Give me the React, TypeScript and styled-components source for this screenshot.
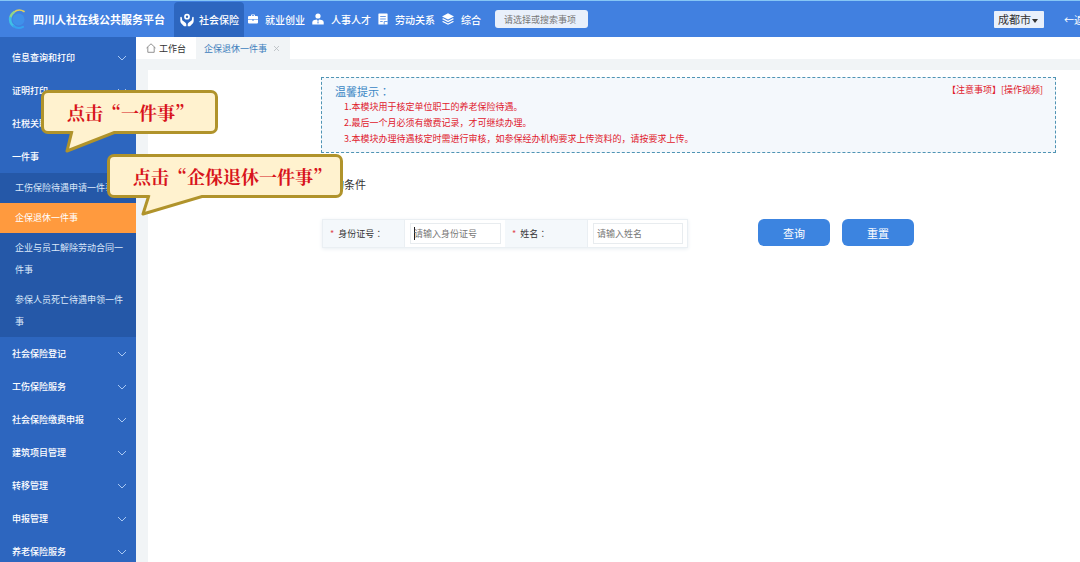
import React from "react";
import styled, { createGlobalStyle } from "styled-components";

const Global = createGlobalStyle`
  * { box-sizing: border-box; }
  html, body { margin: 0; height: 100%; }
  #root { height: 100%; }
  body, button, input, select {
    font-family: "Noto Sans CJK SC", "Liberation Sans", sans-serif;
  }
  body { font-size: 9px; color: #333; background: #fff; overflow: hidden; }
  a { color: inherit; text-decoration: none; }
  ul, ol { margin: 0; padding: 0; list-style: none; }
`;

const Page = styled.div`
  position: relative;
  display: flex;
  flex-direction: column;
  height: 100%;
  overflow: hidden;
`;

const Header = styled.header`
  display: flex;
  flex: none;
  align-items: center;
  height: 37px;
  padding-left: 8px;
  border-top: 1px solid #86c6f5;
  background: #4180e0;
  color: #fff;
  overflow: hidden;
  white-space: nowrap;
`;

const Brand = styled.h1`
  display: flex;
  align-items: center;
  gap: 5px;
  width: 166px;
  margin: 0;
  font-size: 11px;
  font-weight: 700;
`;

const Nav = styled.nav`
  display: flex;
  align-self: stretch;
`;

const NavItem = styled.a<{ $active?: boolean }>`
  display: flex;
  align-items: center;
  gap: ${(p) => (p.$active ? 5 : 7)}px;
  padding: ${(p) => (p.$active ? "0 5px 0 6px" : "0 3px 0 4px")};
  margin-top: ${(p) => (p.$active ? 1 : 0)}px;
  border-radius: 4px 4px 0 0;
  background: ${(p) => (p.$active ? "#2d66bf" : "transparent")};
  font-size: 10px;
  font-weight: 500;
`;

const Search = styled.input`
  width: 93px;
  height: 18px;
  margin-left: 11px;
  padding: 0 9px;
  border: 0;
  border-radius: 3px;
  background: #e9f0fb;
  font-size: 9px;
  &::placeholder { color: #777; opacity: 1; }
`;

const CityBox = styled.div`
  position: relative;
  display: flex;
  align-items: center;
  flex: none;
  margin-left: auto;
  color: #333;
`;

const City = styled.select`
  appearance: none;
  width: 50px;
  height: 17px;
  padding: 0 4px;
  border: 0;
  border-radius: 1px;
  background: #e9f0fb;
  color: #333;
  font-size: 11px;
`;

const CityArrow = styled.svg`
  position: absolute;
  right: 6px;
  top: 8px;
  pointer-events: none;
`;

const Back = styled.a`
  flex: none;
  width: 16px;
  margin-left: 20px;
  overflow: hidden;
  font-size: 10px;
`;

const Body = styled.div`
  display: flex;
  flex: 1;
  min-height: 0;
`;

const Sidebar = styled.aside`
  flex: none;
  width: 136px;
  padding-top: 4px;
  background: #2d66bf;
  color: #fff;
  overflow: hidden;
`;

const MenuButton = styled.button`
  display: flex;
  align-items: center;
  justify-content: space-between;
  width: 100%;
  height: 33px;
  padding: 0 9px 0 12px;
  border: 0;
  background: none;
  color: #fff;
  font-size: 9px;
  font-weight: 500;
  text-align: left;
`;

const SubMenu = styled.ul`
  background: #2558a8;
`;

const SubLink = styled.a<{ $active?: boolean }>`
  display: block;
  padding: 4px 8px 4px 15px;
  background: ${(p) => (p.$active ? "#ff9a3e" : "transparent")};
  color: ${(p) => (p.$active ? "#fff" : "#dbe8fa")};
  line-height: 22px;
`;

const Main = styled.main`
  display: flex;
  flex: 1;
  flex-direction: column;
  min-width: 0;
  background: #f1f4f6;
`;

const Tabs = styled.div`
  display: flex;
  flex: none;
  height: 22px;
  background: #fff;
`;

const Tab = styled.a<{ $active?: boolean }>`
  display: flex;
  align-items: center;
  gap: ${(p) => (p.$active ? 6 : 3)}px;
  padding: 0 10px;
  padding-left: ${(p) => (p.$active ? 8 : 10)}px;
  background: ${(p) => (p.$active ? "#f1f4f6" : "#fff")};
  color: ${(p) => (p.$active ? "#3f80bd" : "#333")};
`;

const Content = styled.div`
  flex: 1;
  margin: 11px 0 0 12px;
  padding: 7px 24px 0 173px;
  background: #fff;
`;

const Notice = styled.section`
  display: flex;
  justify-content: space-between;
  align-items: flex-start;
  min-height: 76px;
  padding: 5px 12px 0 13px;
  border: 1px dashed #4f94b4;
  background: #f4f8fc;
  color: #e0202c;
`;

const NoticeTitle = styled.h2`
  margin: 0;
  color: #3a86c4;
  font-size: 11px;
  font-weight: 400;
  line-height: 16px;
`;

const NoticeList = styled.ol`
  padding-left: 9px;
  line-height: 16px;
`;

const NoticeLinks = styled.div`
  flex: none;
  line-height: 14px;
`;

/* The Japanese face centres the full-width colon in its box. */
const Colon = styled.span`
  font-family: "Noto Sans CJK JP", sans-serif;
`;

const SectionTitle = styled.h2`
  margin: 23px 0 0 1px;
  font-size: 11px;
  font-weight: 400;
  line-height: 16px;
`;

const QueryForm = styled.form`
  display: flex;
  align-items: flex-start;
  margin: 27px 0 0 1px;
`;

const Fields = styled.div`
  display: grid;
  grid-template-columns: 81px 101px 82px 100px;
  height: 29px;
  border: 1px solid #eaeff3;
  box-shadow: 0 1px 4px #e8eef2;
`;

const Label = styled.label`
  display: flex;
  align-items: center;
  padding-left: 7px;
  background: #f4f8fb;
`;

const Required = styled.span`
  margin-right: 4px;
  color: #e04a50;
`;

const Cell = styled.div`
  display: flex;
  align-items: center;
  padding: 0 4px 0 5px;
  border-left: 1px solid #eaeff3;
`;

const Field = styled.div`
  display: flex;
  align-items: center;
  width: 100%;
  height: 21px;
  padding-left: 3px;
  border: 1px solid #e8ecef;
`;

const Caret = styled.span`
  flex: none;
  width: 1px;
  height: 13px;
  margin-right: -1px;
  background: #222;
`;

const TextInput = styled.input`
  width: 100%;
  min-width: 0;
  padding: 0;
  border: 0;
  outline: 0;
  background: none;
  font-size: 9px;
  &::placeholder { color: #777; opacity: 1; }
`;

const Actions = styled.div`
  display: flex;
  gap: 12px;
  margin-left: 70px;
`;

const ActionButton = styled.button`
  width: 72px;
  height: 27px;
  padding: 0;
  border: 0;
  border-radius: 6px;
  background: #3c84e0;
  color: #fff;
  font-size: 11px;
`;

const Bubble = styled.div<{ $left: number; $top: number; $width: number }>`
  position: absolute;
  left: ${(p) => p.$left}px;
  top: ${(p) => p.$top}px;
  width: ${(p) => p.$width}px;
  height: 44px;
  padding-left: 23px;
  border: 3px solid #b0932b;
  border-radius: 7px;
  background: #fff2cf;
  color: #d8141c;
  font-family: "Noto Serif CJK SC", "Noto Sans CJK SC", serif;
  font-size: 18px;
  font-weight: 700;
  line-height: 38px;
  white-space: nowrap;
`;

const Tail = styled.svg`
  position: absolute;
  left: 20px;
  top: 38px;
`;

const Chevron = () => (
  <svg width="10" height="6" viewBox="0 0 10 6" fill="none" stroke="#a9c8f2" aria-hidden="true">
    <path d="M1 1l4 4 4-4" />
  </svg>
);

const Logo = () => (
  <svg width="20" height="22" viewBox="0 0 20 22" fill="none" strokeLinecap="round" aria-hidden="true">
    <circle cx="10.500" cy="11.500" r="6" fill="#3f90ea" />
    <path d="M16 3.500A8.500 8.500 0 0 0 6 4.200" stroke="#e0cf5a" strokeWidth="1.600" />
    <path d="M6 4.200A8.500 8.500 0 0 0 2.200 10" stroke="#8fd48a" strokeWidth="2.200" />
    <path d="M2.200 10A8.500 8.500 0 0 0 5.500 18" stroke="#3fc0e6" strokeWidth="2.600" />
    <path d="M5.500 18A8.500 8.500 0 0 0 15 18.800" stroke="#35a2f0" strokeWidth="2" />
  </svg>
);

const icons = {
  hands: (
    <svg width="14" height="14" viewBox="0 0 14 14" fill="#fff" aria-hidden="true">
      <path
        fillRule="evenodd"
        d="M7 .8a2.900 2.900 0 1 1 0 5.800A2.900 2.900 0 1 1 7 .8zM7 2.500a1.200 1.200 0 1 0 0 2.400A1.200 1.200 0 1 0 7 2.500z"
      />
      <path d="M.3 4.600c0-1 1.400-1 1.500 0l.4 2.700 3 2.200c.8.600 1.100 1.300 1.100 2.200v1.600H4L1.300 10.600C.5 9.700.3 8.500.3 7z" />
      <path d="M13.700 4.600c0-1-1.400-1-1.500 0l-.4 2.700-3 2.200c-.8.600-1.100 1.300-1.100 2.200v1.600H10l2.700-2.700c.8-.9 1-2.100 1-3.600z" />
    </svg>
  ),
  briefcase: (
    <svg width="10" height="10" viewBox="0 0 10 10" fill="#fff" aria-hidden="true">
      <path d="M3 2V1.200Q3 .4 3.800.4h2.400Q7 .4 7 1.200V2h2q1 0 1 1v2.300H0V3q0-1 1-1zm.9 0h2.200v-.7H3.900z" />
      <path d="M0 5.800h4v.7h2v-.7h4V8.500q0 1-1 1H1q-1 0-1-1z" />
    </svg>
  ),
  person: (
    <svg width="12" height="12" viewBox="0 0 12 12" fill="#fff" aria-hidden="true">
      <circle cx="6" cy="3" r="2.600" />
      <path d="M.3 11.500V9.200q0-2 2-2.300L5 6.500l1 2 1-2 2.700.4q2 .3 2 2.300v2.300z" />
      <path d="M6 8.200l.7.800L6 11.300 5.300 9z" fill="#4180e0" />
    </svg>
  ),
  doc: (
    <svg width="10" height="12" viewBox="0 0 10 12" fill="none" aria-hidden="true">
      <path d="M1 .5h8q.6 0 .6.6v9.800q0 .6-.6.6H1q-.6 0-.6-.6V1.100Q.4.500 1 .500z" fill="#fff" />
      <path d="M2.200 3.500h5.600M2.200 6h5.600M2.200 8.500h2.500M6.200 11.500V8.500H9.600" stroke="#4180e0" strokeWidth=".8" />
    </svg>
  ),
  layers: (
    <svg width="12" height="12" viewBox="0 0 12 12" fill="#fff" aria-hidden="true">
      <path d="M6 .2l6 3.200-6 3.200-6-3.200z" />
      <path d="M1.200 5.300L6 7.800l4.800-2.500 1.200.8-6 3.100-6-3.100z" />
      <path d="M1.200 7.900L6 10.400l4.800-2.500 1.200.8-6 3.100-6-3.100z" />
    </svg>
  ),
};

const navItems = [
  { label: "社会保险", icon: icons.hands, active: true },
  { label: "就业创业", icon: icons.briefcase },
  { label: "人事人才", icon: icons.person },
  { label: "劳动关系", icon: icons.doc },
  { label: "综合", icon: icons.layers },
];

const menuTop = ["信息查询和打印", "证明打印", "社税关联"];
const subItems = [
  "工伤保险待遇申请一件事",
  "企保退休一件事",
  "企业与员工解除劳动合同一件事",
  "参保人员死亡待遇申领一件事",
];
const menuBottom = [
  "社会保险登记",
  "工伤保险服务",
  "社会保险缴费申报",
  "建筑项目管理",
  "转移管理",
  "申报管理",
  "养老保险服务",
];

const MenuRow = ({ label, open }: { label: string; open?: boolean }) => (
  <MenuButton type="button" aria-expanded={!!open}>
    {label}
    {!open && <Chevron />}
  </MenuButton>
);

type CalloutProps = {
  left: number;
  top: number;
  width: number;
  tip: string;
  children: React.ReactNode;
};

const Callout = ({ left, top, width, tip, children }: CalloutProps) => (
  <Bubble $left={left} $top={top} $width={width}>
    {children}
    <Tail width="84" height="25" viewBox="0 0 84 25" aria-hidden="true">
      <path d={tip} fill="#fff2cf" stroke="#b0932b" strokeWidth="3" strokeLinejoin="round" />
    </Tail>
  </Bubble>
);

export default function App() {
  return (
    <Page>
      <Global />
      <Header>
        <Brand>
          <Logo />
          四川人社在线公共服务平台
        </Brand>
        <Nav>
          {navItems.map((n) => (
            <NavItem key={n.label} href="#" $active={n.active}>
              {n.icon}
              {n.label}
            </NavItem>
          ))}
        </Nav>
        <Search aria-label="搜索事项" placeholder="请选择或搜索事项" />
        <CityBox>
          <City aria-label="城市">
            <option>成都市</option>
          </City>
          <CityArrow width="6" height="4" viewBox="0 0 6 4" aria-hidden="true">
            <path d="M0 0h6L3 4z" fill="#333" />
          </CityArrow>
        </CityBox>
        <Back href="#">←返回</Back>
      </Header>
      <Body>
        <Sidebar>
          {menuTop.map((m) => (
            <MenuRow key={m} label={m} />
          ))}
          <MenuRow label="一件事" open />
          <SubMenu>
            {subItems.map((s, i) => (
              <li key={s}>
                <SubLink href="#" $active={i === 1}>
                  {s}
                </SubLink>
              </li>
            ))}
          </SubMenu>
          {menuBottom.map((m) => (
            <MenuRow key={m} label={m} />
          ))}
        </Sidebar>
        <Main>
          <Tabs>
            <Tab href="#">
              <svg width="10" height="10" viewBox="0 0 10 10" fill="none" stroke="#777" strokeWidth=".8" aria-hidden="true">
                <path d="M.5 5L5 .8 9.500 5M1.800 4v5.300h6.400V4" />
              </svg>
              工作台
            </Tab>
            <Tab href="#" $active>
              企保退休一件事
              <svg width="7" height="7" viewBox="0 0 7 7" stroke="#b5babf" strokeWidth=".8" aria-hidden="true">
                <path d="M1 1l5 5M6 1L1 6" />
              </svg>
            </Tab>
          </Tabs>
          <Content>
            <Notice>
              <div>
                <NoticeTitle>
                  温馨提示<Colon>：</Colon>
                </NoticeTitle>
                <NoticeList>
                  <li>1.本模块用于核定单位职工的养老保险待遇。</li>
                  <li>2.最后一个月必须有缴费记录，才可继续办理。</li>
                  <li>3.本模块办理待遇核定时需进行审核，如参保经办机构要求上传资料的，请按要求上传。</li>
                </NoticeList>
              </div>
              <NoticeLinks>
                <a href="#">【注意事项】</a>
                <a href="#">[操作视频]</a>
              </NoticeLinks>
            </Notice>
            <SectionTitle>查询条件</SectionTitle>
            <QueryForm>
              <Fields>
                <Label htmlFor="idno">
                  <Required>*</Required>身份证号<Colon>：</Colon>
                </Label>
                <Cell>
                  <Field>
                    <Caret />
                    <TextInput id="idno" placeholder="请输入身份证号" />
                  </Field>
                </Cell>
                <Label htmlFor="name">
                  <Required>*</Required>姓名<Colon>：</Colon>
                </Label>
                <Cell>
                  <Field>
                    <TextInput id="name" placeholder="请输入姓名" />
                  </Field>
                </Cell>
              </Fields>
              <Actions>
                <ActionButton type="button">查询</ActionButton>
                <ActionButton type="reset">重置</ActionButton>
              </Actions>
            </QueryForm>
          </Content>
        </Main>
      </Body>
      <Callout left={41} top={90} width={177} tip="M8 0L3 20L54 0">
        点击“一件事”
      </Callout>
      <Callout left={107} top={154} width={236} tip="M19 0L13 19L77 0">
        点击“企保退休一件事”
      </Callout>
    </Page>
  );
}
